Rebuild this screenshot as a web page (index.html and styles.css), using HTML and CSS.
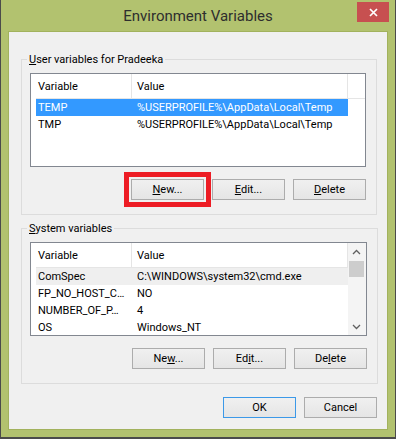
FILE: index.html
```html
<!DOCTYPE html>
<html lang="en">
<head>
    <meta charset="UTF-8">
    <title>Environment Variables</title>
    <link rel="stylesheet" href="styles.css">
</head>
<body>
    <div class="window">
        <div class="titlebar">
            <span class="title">Environment Variables</span>
            <button class="close" aria-label="Close">
                <svg width="9" height="9" viewBox="0 0 9 9"><path d="M1 1 L8 8 M8 1 L1 8" stroke="#fff" stroke-width="1.7" fill="none"/></svg>
            </button>
        </div>

        <div class="client">
            <!-- User variables -->
            <fieldset class="group">
                <legend><u>U</u>ser variables for Pradeeka</legend>
                <div class="list">
                    <div class="list-main">
                        <div class="list-head">
                            <span class="cell col-name">Variable</span>
                            <span class="cell col-value">Value</span>
                            <span class="cell col-fill"></span>
                        </div>
                        <div class="row selected">
                            <span class="cell col-name">TEMP</span>
                            <span class="cell col-value">%USERPROFILE%\AppData\Local\Temp</span>
                        </div>
                        <div class="row">
                            <span class="cell col-name">TMP</span>
                            <span class="cell col-value">%USERPROFILE%\AppData\Local\Temp</span>
                        </div>
                    </div>
                </div>
                <div class="buttons">
                    <button class="btn marked"><u>N</u>ew...</button>
                    <button class="btn"><u>E</u>dit...</button>
                    <button class="btn"><u>D</u>elete</button>
                </div>
            </fieldset>

            <!-- System variables -->
            <fieldset class="group">
                <legend><u>S</u>ystem variables</legend>
                <div class="list">
                    <div class="list-main">
                        <div class="list-head">
                            <span class="cell col-name">Variable</span>
                            <span class="cell col-value">Value</span>
                        </div>
                        <div class="row focused">
                            <span class="cell col-name">ComSpec</span>
                            <span class="cell col-value">C:\WINDOWS\system32\cmd.exe</span>
                        </div>
                        <div class="row">
                            <span class="cell col-name">FP_NO_HOST_C…</span>
                            <span class="cell col-value">NO</span>
                        </div>
                        <div class="row">
                            <span class="cell col-name">NUMBER_OF_P…</span>
                            <span class="cell col-value">4</span>
                        </div>
                        <div class="row">
                            <span class="cell col-name">OS</span>
                            <span class="cell col-value">Windows_NT</span>
                        </div>
                    </div>
                    <div class="scrollbar">
                        <span class="sb-btn">
                            <svg width="9" height="6" viewBox="0 0 9 6"><path d="M1 5 L4.5 1.5 L8 5" stroke="#606060" stroke-width="1.3" fill="none"/></svg>
                        </span>
                        <span class="sb-thumb"></span>
                        <span class="sb-btn sb-down">
                            <svg width="9" height="6" viewBox="0 0 9 6"><path d="M1 1 L4.5 4.5 L8 1" stroke="#606060" stroke-width="1.3" fill="none"/></svg>
                        </span>
                    </div>
                </div>
                <div class="buttons">
                    <button class="btn">Ne<u>w</u>...</button>
                    <button class="btn">Ed<u>i</u>t...</button>
                    <button class="btn">De<u>l</u>ete</button>
                </div>
            </fieldset>

            <div class="dialog-buttons">
                <button class="btn default">OK</button>
                <button class="btn">Cancel</button>
            </div>
        </div>
    </div>
</body>
</html>
```

FILE: styles.css
```css
/* Ventana estilo Windows 8 */
* {
    box-sizing: border-box;
}
body {
    margin: 0;
    font-family: Roboto, "Liberation Sans", sans-serif;
    font-size: 11px;
    color: #000;
}
.window {
    width: 396px;
    height: 439px;
    background: #b2c26f;
    border: 1px solid #4b4b4b;
    border-top: 0;
    border-bottom-width: 2px;
    padding-bottom: 7px;
    display: flex;
    flex-direction: column;
}
.titlebar {
    height: 31px;
    display: grid;
    grid-template-columns: 1fr auto 1fr;
}
.title {
    grid-column: 2;
    font-size: 15px;
    line-height: 31px;
    color: #2e2e2e;
    padding-top: 1px;
}
.close {
    grid-column: 3;
    justify-self: end;
    align-self: start;
    width: 32px;
    height: 20px;
    margin: 2px 6px 0 0;
    padding: 0;
    border: 0;
    background: #c75050;
    display: flex;
    align-items: center;
    justify-content: center;
}
.client {
    margin: 0 7px;
    height: 399px;
    background: #f0f0f0;
    border: 1px solid #a2b25d;
    padding: 20px 0 0 12px;
}
.group {
    width: 356px;
    margin: 0;
    border: 1px solid #dcdcdc;
    padding: 0 10px 14px 8px;
}
.group + .group {
    margin-top: 6px;
}
.group legend {
    line-height: 15px;
    padding: 0 2px;
    margin-left: -3px;
}
.list {
    margin-top: 6px;
    height: 94px;
    border: 1px solid #828790;
    background: #fff;
    padding-left: 5px;
    display: flex;
    overflow: hidden;
}
.list-main {
    flex: 1;
    min-width: 0;
}
.list-head {
    display: flex;
    height: 25px;
    border-bottom: 1px solid #e5e5e5;
}
.list-head .cell {
    border-right: 1px solid #e5e5e5;
}
.list-head .col-fill {
    flex: 1;
    border-right: 0;
}
.cell {
    display: flex;
    align-items: center;
    white-space: nowrap;
    overflow: hidden;
}
.col-name {
    width: 96px;
    padding-left: 2px;
}
.col-value {
    width: 216px;
    padding-left: 5px;
}
.row {
    display: flex;
    width: 312px;
    height: 17px;
}
.row.selected {
    background: #3399ff;
    color: #fff;
}
.row.focused {
    background: #efefef;
}
.scrollbar {
    width: 18px;
    background: #f4f4f4;
    display: flex;
    flex-direction: column;
}
.sb-btn {
    height: 17px;
    display: flex;
    align-items: center;
    justify-content: center;
    padding-right: 1px;
}
.sb-thumb {
    height: 16px;
    margin: 1px 2px 0 1px;
    background: #cdcdcd;
}
.sb-down {
    margin-top: auto;
}
.buttons,
.dialog-buttons {
    display: flex;
    justify-content: flex-end;
    gap: 8px;
}
.buttons {
    margin-top: 12px;
}
.dialog-buttons {
    width: 356px;
    margin-top: 13px;
}
.btn {
    width: 73px;
    height: 21px;
    padding: 0;
    border: 1px solid #acacac;
    background: linear-gradient(#f0f0f0, #e5e5e5);
    font: inherit;
    color: #000;
}
.btn.default {
    border-color: #3c99e8;
}
.btn.marked {
    outline: 5px solid #ed1c24;
    outline-offset: 2px;
}
```
